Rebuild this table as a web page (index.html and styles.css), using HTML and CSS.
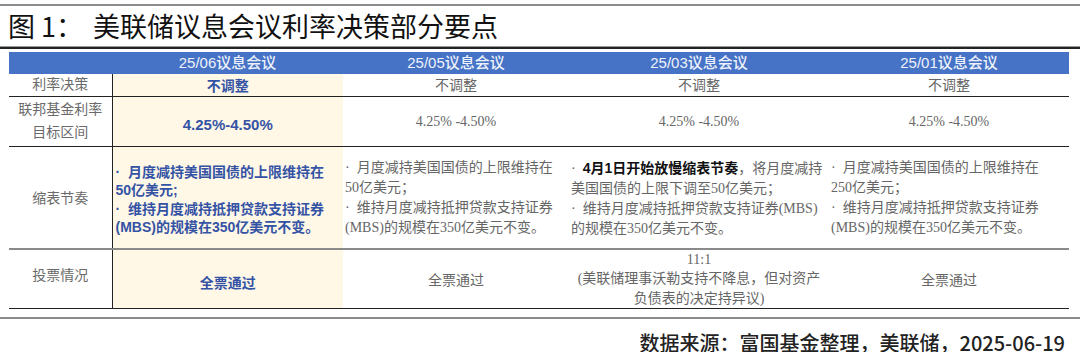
FILE: index.html
```html
<!DOCTYPE html>
<html lang="zh-CN">
<head>
    <meta charset="UTF-8">
    <meta name="viewport" content="width=device-width, initial-scale=1.0">
    <title>美联储议息会议利率决策部分要点</title>
    <link rel="stylesheet" href="styles.css">
</head>
<body>
    <div class="top-rule"></div>
    <h1 class="title"><span class="fig">图 1：</span><span>美联储议息会议利率决策部分要点</span></h1>

    <table class="fed">
        <colgroup>
            <col class="c-label">
            <col class="c-hl">
            <col class="c-may">
            <col class="c-mar">
            <col class="c-jan">
        </colgroup>
        <thead>
            <tr>
                <th></th>
                <th>25/06议息会议</th>
                <th>25/05议息会议</th>
                <th>25/03议息会议</th>
                <th>25/01议息会议</th>
            </tr>
        </thead>
        <tbody>
            <tr class="r-decision">
                <td class="label">利率决策</td>
                <td class="hl">不调整</td>
                <td class="val">不调整</td>
                <td class="val">不调整</td>
                <td class="val">不调整</td>
            </tr>
            <tr class="r-rate">
                <td class="label">联邦基金利率<br>目标区间</td>
                <td class="hl num">4.25%-4.50%</td>
                <td class="val num">4.25% -4.50%</td>
                <td class="val num">4.25% -4.50%</td>
                <td class="val num">4.25% -4.50%</td>
            </tr>
            <tr class="r-qt">
                <td class="label">缩表节奏</td>
                <td class="hl text">·&nbsp; 月度减持美国国债的上限维持在<br>50亿美元;<br>·&nbsp; 维持月度减持抵押贷款支持证券<br>(MBS)的规模在350亿美元不变。</td>
                <td class="val text">·&nbsp; 月度减持美国国债的上限维持在<br>50亿美元；<br>·&nbsp; 维持月度减持抵押贷款支持证券<br>(MBS)的规模在350亿美元不变。</td>
                <td class="val text">·&nbsp; <b>4月1日开始放慢缩表节奏</b>，将月度减持<br>美国国债的上限下调至50亿美元；<br>·&nbsp; 维持月度减持抵押贷款支持证券(MBS)<br>的规模在350亿美元不变。</td>
                <td class="val text">·&nbsp; 月度减持美国国债的上限维持在<br>250亿美元；<br>·&nbsp; 维持月度减持抵押贷款支持证券<br>(MBS)的规模在350亿美元不变。</td>
            </tr>
            <tr class="r-vote">
                <td class="label">投票情况</td>
                <td class="hl">全票通过</td>
                <td class="val">全票通过</td>
                <td class="val note">11:1<br>(美联储理事沃勒支持不降息，但对资产<br>负债表的决定持异议)</td>
                <td class="val">全票通过</td>
            </tr>
        </tbody>
    </table>

    <div class="bottom-rule"></div>
    <p class="source">数据来源：富国基金整理，美联储，2025-06-19</p>
</body>
</html>
```

FILE: styles.css
```css
body {
    margin: 0;
    background-color: white;
    font-family: "Liberation Sans", "Noto Sans CJK SC", sans-serif;
    color: #222;
}

.top-rule {
    height: 2px;
    margin-top: 4px;
    background-color: #8c8c8c;
}

.title {
    margin: 0;
    height: 40px;
    padding-left: 8px;
    font-family: "Noto Sans CJK SC", sans-serif;
    font-size: 27px;
    font-weight: normal;
    line-height: 40px;
    color: #111;
    border-bottom: 1px solid #9a9a9a;
    box-shadow: 0 2px 0 #222;
}

.title .fig {
    display: inline-block;
    width: 85px;
}

/* table */
.fed {
    margin: 5px 0 0 9px;
    width: 1060px;
    border-collapse: collapse;
    table-layout: fixed;
    font-size: 14px;
}

.c-label { width: 103px; }
.c-hl { width: 231px; }
.c-may { width: 226px; }
.c-mar { width: 260px; }
.c-jan { width: 240px; }

.fed th {
    height: 22px;
    padding: 0;
    background-color: #4673c6;
    color: #eef2fb;
    font-size: 15px;
    font-weight: 500;
    line-height: 22px;
}

.fed td {
    box-sizing: border-box;
    padding: 0;
    border-bottom: 1px solid #222;
    text-align: center;
    vertical-align: middle;
}

.fed .label {
    font-family: "Noto Sans CJK SC", sans-serif;
    color: #6a6a6a;
    border-right: 1px solid #222;
    line-height: 23px;
}

.fed .hl {
    background-color: #fff8e7;
    color: #3553a5;
    font-weight: bold;
}

.fed .val {
    font-family: "Liberation Serif", "Noto Sans CJK SC", serif;
    color: #666;
}

.fed .val b {
    font-family: "Liberation Sans", "Noto Sans CJK SC", sans-serif;
    color: #111;
}

.fed .num {
    font-size: 14px;
}

.fed .hl.num {
    font-size: 15px;
    padding-top: 5px;
}

.r-decision td { height: 22px; line-height: 19px; }
.r-decision .label { line-height: 16px; padding-bottom: 5px; }
.r-decision .hl { padding-top: 3px; }

.r-rate td { height: 44px; }
.r-rate .label { line-height: 23px; padding-bottom: 3px; }

.r-qt td { height: 102px; border-bottom: 2px solid #8a8a8a; }

.fed .text {
    text-align: left;
    white-space: nowrap;
    line-height: 20px;
    padding: 2px 0 0 2px;
}

.fed .hl.text {
    line-height: 18.5px;
    padding: 5px 0 0 3px;
}

.r-vote td { height: 60px; }
.r-vote .label { padding-bottom: 8px; }
.r-vote .hl { padding-top: 6px; }

.fed .note {
    line-height: 19.5px;
}

.bottom-rule {
    height: 2px;
    margin-top: 8px;
    background-color: #8c8c8c;
}

.source {
    margin: 15px 15px 0 0;
    text-align: right;
    font-family: "Noto Sans CJK SC", sans-serif;
    font-size: 20px;
    font-weight: 500;
    line-height: 18px;
    color: #222;
}
```
